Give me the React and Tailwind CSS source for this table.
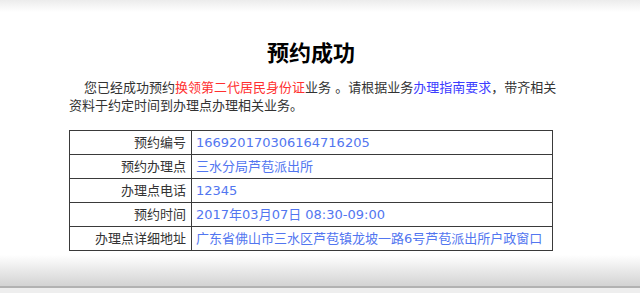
export default function App() {
  const rows = [
    ["预约编号", "166920170306164716205"],
    ["预约办理点", "三水分局芦苞派出所"],
    ["办理点电话", "12345"],
    ["预约时间", "2017年03月07日 08:30-09:00"],
    ["办理点详细地址", "广东省佛山市三水区芦苞镇龙坡一路6号芦苞派出所户政窗口"],
  ];

  return (
    <main className="relative h-[293px] w-[640px] overflow-hidden bg-white font-['DejaVu_Sans','Noto_Sans_CJK_SC',sans-serif] text-[#333]">
      {/* faint top shadow */}
      <div className="h-[12px] bg-gradient-to-b from-[#ececec] to-white" />

      <section className="ml-[69px] w-[484px]">
        <h1 className="mt-[24px] text-center font-['Noto_Sans_CJK_SC',sans-serif] text-[22px] font-bold leading-[30px] text-black">
          预约成功
        </h1>

        <p className="mt-[13px] whitespace-nowrap text-[13px] leading-[18px]">
          <span className="pl-[15px]">您已经成功预约</span>
          <span className="text-[#ff3030]">换领第二代居民身份证</span>
          业务 。请根据业务
          <span className="text-[#3c3cff]">办理指南要求</span>
          ，带齐相关
          <br />
          资料于约定时间到办理点办理相关业务。
        </p>

        <table className="mt-[15px] w-[484px] border-collapse text-[13px]">
          <tbody>
            {rows.map(([label, value]) => (
              <tr key={label}>
                <td className="h-[24px] w-[122px] border border-[#3a3a3a] py-0 pr-[5px] text-right leading-[22px]">
                  {label}
                </td>
                <td className="h-[24px] border border-[#3a3a3a] py-0 pl-[4px] leading-[22px] text-[#5276f0]">
                  {value}
                </td>
              </tr>
            ))}
          </tbody>
        </table>
      </section>

      {/* footer band */}
      <footer className="mt-[4px]">
        <div className="h-[33px] border-b-2 border-[#b2b2b2] bg-gradient-to-b from-white to-[#d3d3d3]" />
        <div className="h-[6px] bg-[#eeeeee]" />
      </footer>
    </main>
  );
}
